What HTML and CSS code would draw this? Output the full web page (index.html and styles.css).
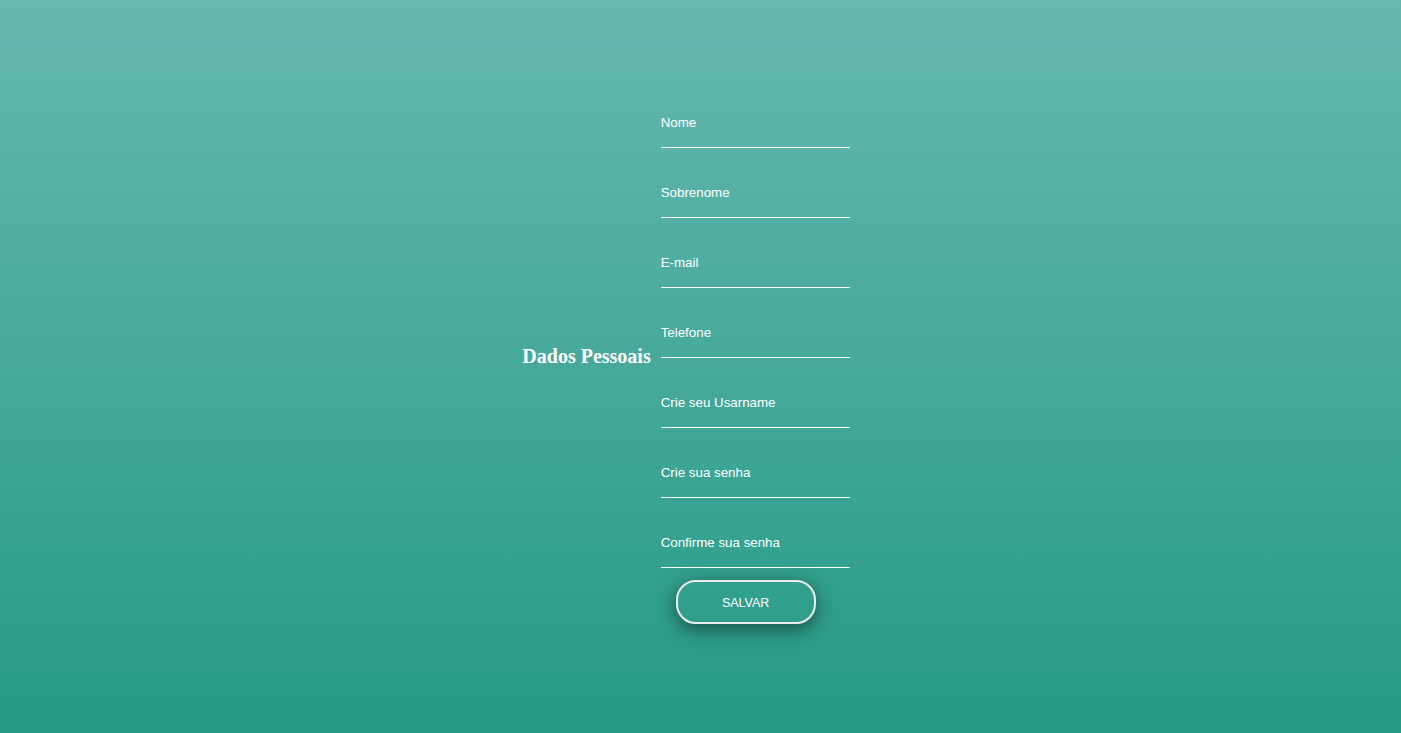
FILE: index.html
```html
<!DOCTYPE html>
<html lang="pt">
<head>
<meta charset="utf-8">
<title>Dados Pessoais</title>
<link rel="stylesheet" href="styles.css">
</head>
<body>
<main class="page">
  <h3 class="title">Dados Pessoais</h3>
  <form class="form">
    <input class="field" type="text" placeholder="Nome">
    <input class="field" type="text" placeholder="Sobrenome">
    <input class="field" type="email" placeholder="E-mail">
    <input class="field" type="tel" placeholder="Telefone">
    <input class="field" type="text" placeholder="Crie seu Usarname">
    <input class="field" type="password" placeholder="Crie sua senha">
    <input class="field" type="password" placeholder="Confirme sua senha">
    <button class="btn" type="button">SALVAR</button>
  </form>
</main>
</body>
</html>
```

FILE: styles.css
```css
html, body {
  margin: 0;
  height: 100%;
}
body {
  background: linear-gradient(to bottom, #67b8b1 0%, #259a85 100%);
  font-family: "Liberation Sans", Arial, sans-serif;
}
.page {
  box-sizing: border-box;
  min-height: 100vh;
  display: flex;
  flex-direction: row;
  justify-content: center;
  align-items: center;
  gap: 10px;
  padding-top: 0;
  padding-bottom: 12px;
}
.title {
  margin: 0 0 8px 0;
  font-family: "Liberation Serif", "Times New Roman", serif;
  font-size: 20px;
  font-weight: bold;
  color: #ffffff;
}
.form {
  display: flex;
  flex-direction: column;
  align-items: flex-start;
  padding-right: 29px;
}
.field {
  display: block;
  box-sizing: border-box;
  width: 189px;
  height: 51px;
  margin: 0 0 19px 0;
  padding: 0;
  border: none;
  border-bottom: 1px solid #ffffff;
  background: transparent;
  color: #ffffff;
  font-family: "Liberation Sans", Arial, sans-serif;
  font-size: 13.33px;
  outline: none;
}
.field:last-of-type {
  margin-bottom: 12px;
}
.field::placeholder {
  color: #ffffff;
  opacity: 1;
}
.btn {
  box-sizing: border-box;
  margin-left: 15px;
  width: 140px;
  height: 44px;
  padding-top: 2px;
  border: 2px solid #ececec;
  border-radius: 20px;
  background: transparent;
  color: #ffffff;
  font-family: "Liberation Sans", Arial, sans-serif;
  font-size: 12.5px;
  box-shadow: 0 5px 20px rgba(0, 0, 0, 0.5);
  cursor: pointer;
}
```
